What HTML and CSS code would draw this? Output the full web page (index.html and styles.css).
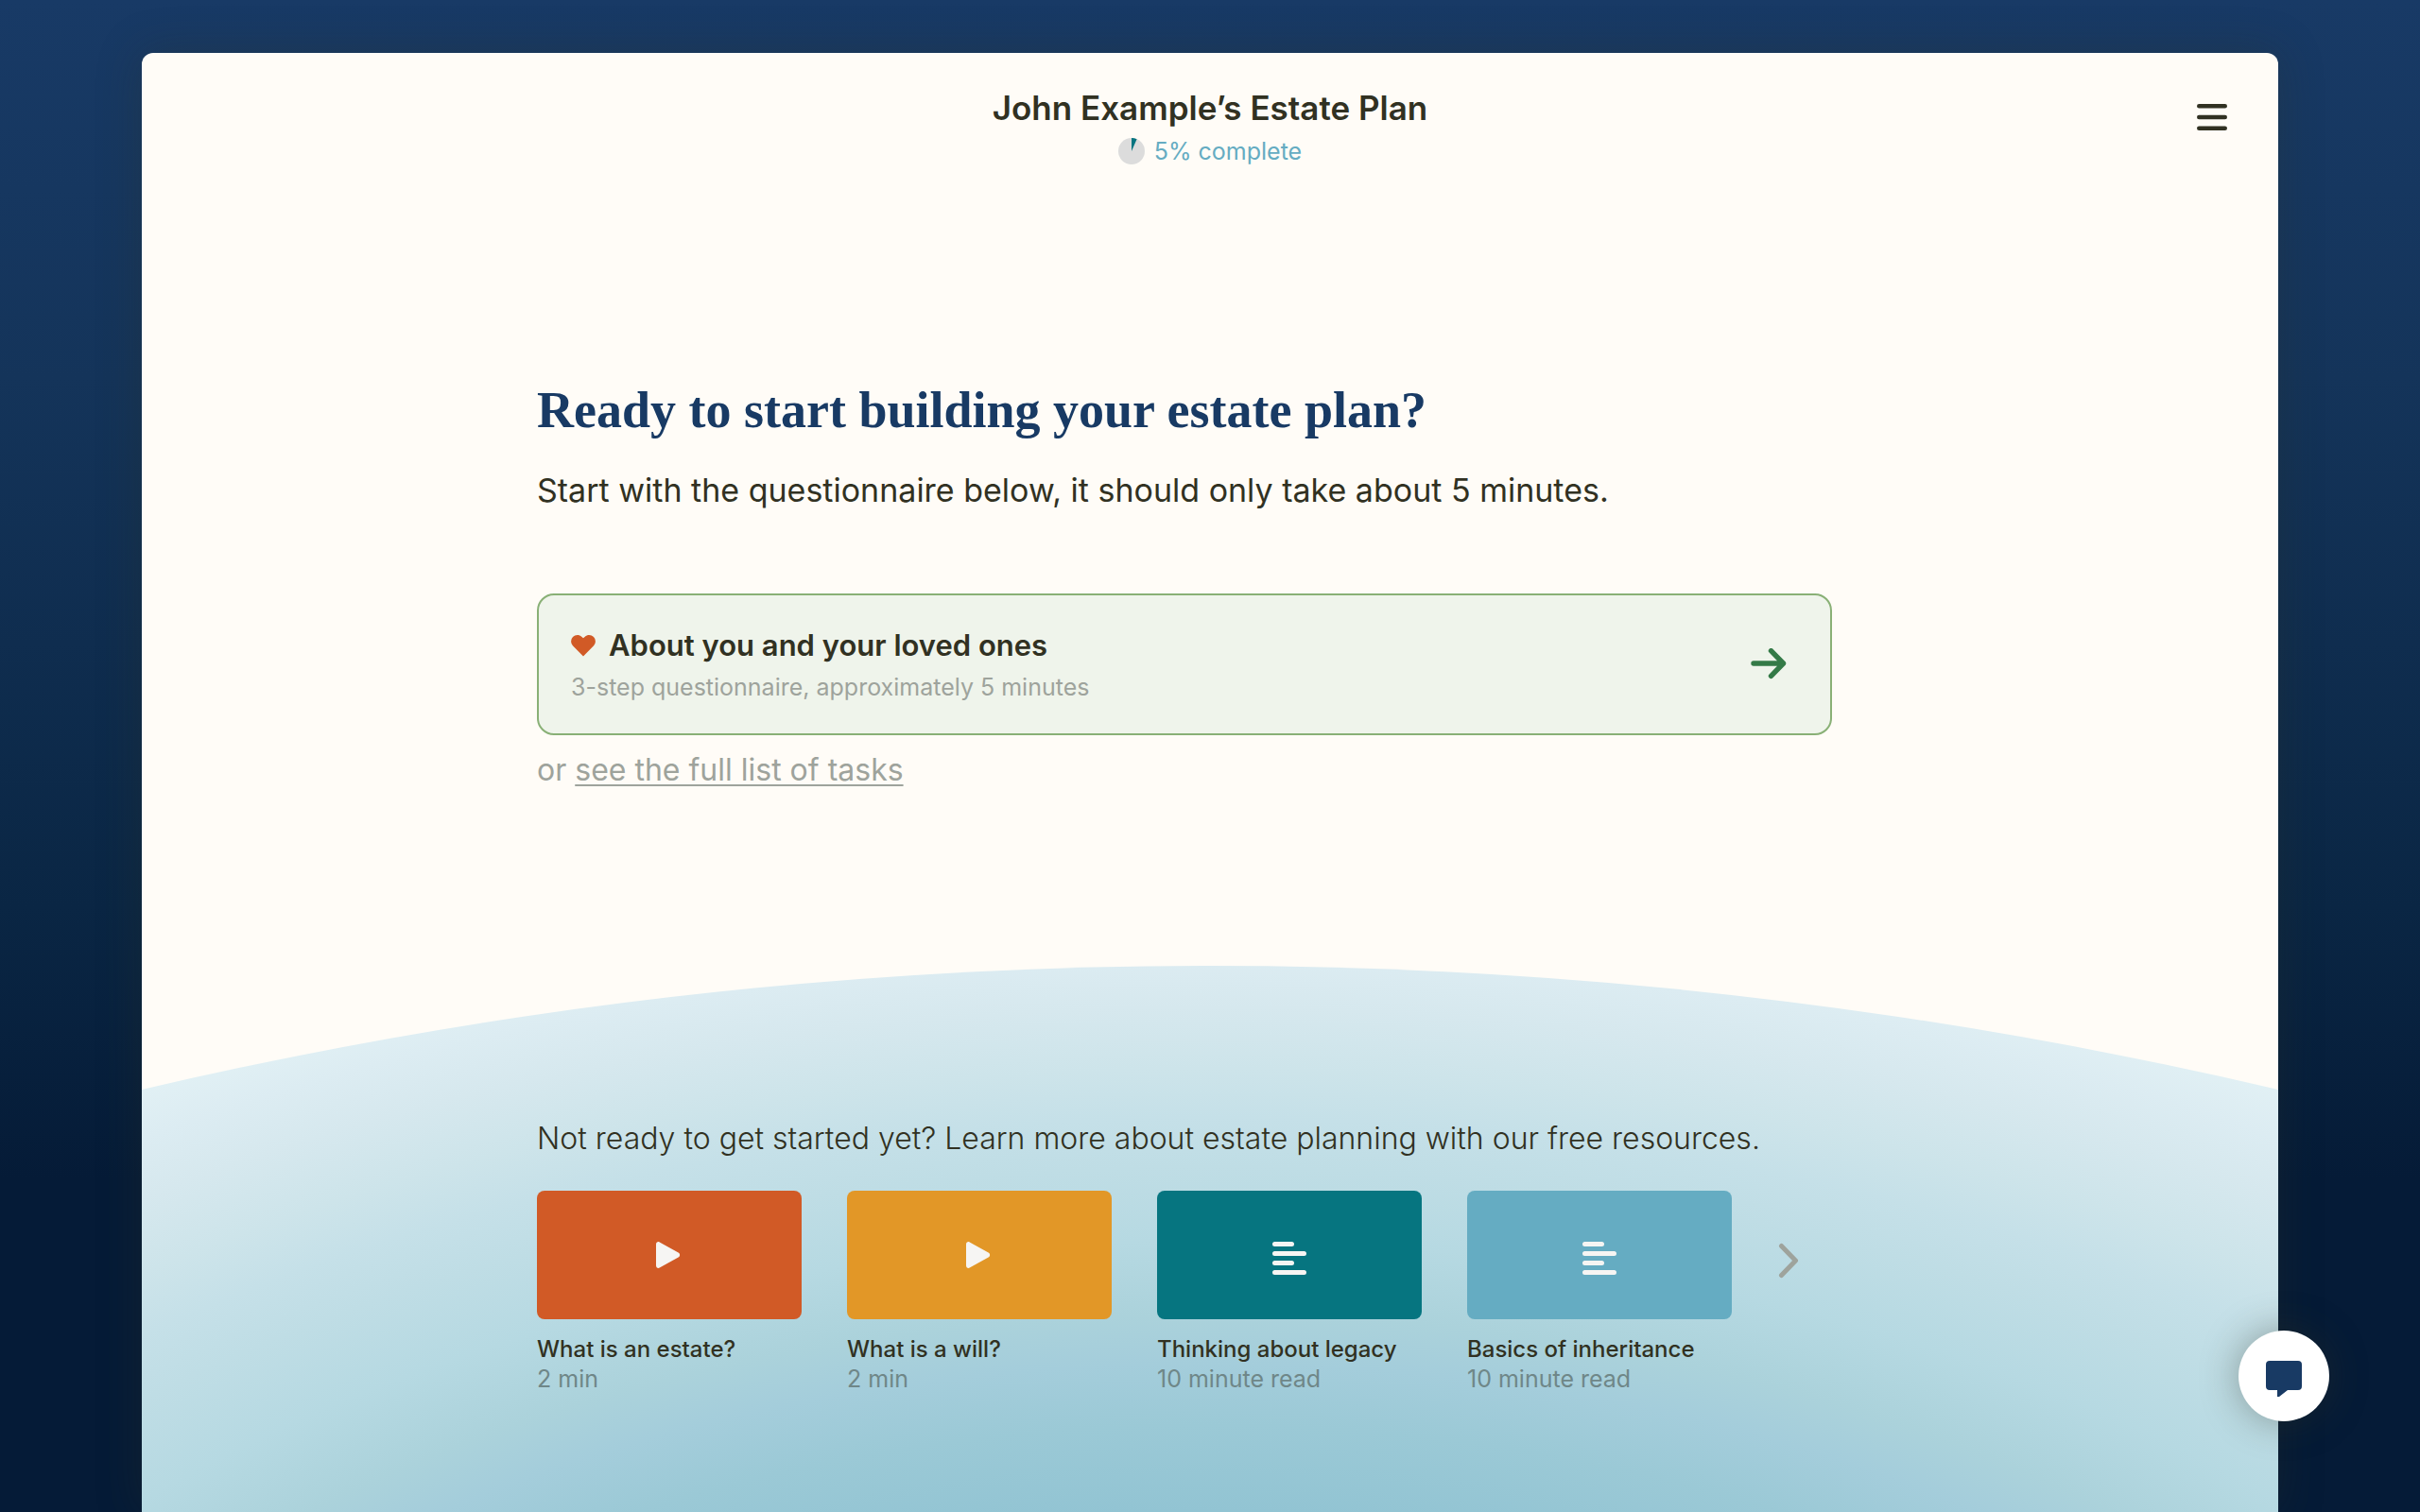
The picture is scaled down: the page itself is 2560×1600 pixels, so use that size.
FILE: index.html
```html
<!DOCTYPE html>
<html lang="en">
<head>
<meta charset="utf-8">
<meta name="viewport" content="width=device-width, initial-scale=1">
<title>John Example’s Estate Plan</title>
<link rel="stylesheet" href="styles.css">
</head>
<body>
<div class="sheet">
  <header class="header">
    <div class="header-title">
      <h1 class="plan-name">John Example’s Estate Plan</h1>
      <p class="progress">
        <svg class="progress-pie" viewBox="0 0 28 28" aria-hidden="true"><circle cx="14" cy="14" r="14" fill="#dcdcdc"/><path d="M14 14V0a14 14 0 0 1 5.600 1.200z" fill="#067580"/></svg>
        <span>5% complete</span>
      </p>
    </div>
    <button class="menu" type="button" aria-label="Menu">
      <svg viewBox="0 0 32 30" width="32" height="30" aria-hidden="true" stroke="#313122" stroke-width="4.600" stroke-linecap="round"><path d="M2.300 3.200h27.400M2.300 15h27.400M2.300 26.800h27.400"/></svg>
    </button>
  </header>

  <main class="main">
    <section class="start column">
      <h2 class="headline">Ready to start building your estate plan?</h2>
      <p class="lead">Start with the questionnaire below, it should only take about 5 minutes.</p>
      <a class="task" href="#questionnaire">
        <span class="task-text">
          <span class="task-title">
            <svg class="heart" viewBox="0 0 26 23" aria-hidden="true"><path d="M13 22.500 1.900 11.300A6.600 6.600 0 0 1 2 2.100C4.500-.5 8.600-.6 11.200 1.700L13 3.300l1.800-1.600C17.400-.6 21.500-.5 24 2.100a6.600 6.600 0 0 1 .1 9.200z" fill="#d15a26"/></svg>
            <span>About you and your loved ones</span>
          </span>
          <span class="task-meta">3-step questionnaire, approximately 5 minutes</span>
        </span>
        <svg class="arrow" viewBox="0 0 38 34" aria-hidden="true" fill="none" stroke="#347a47" stroke-width="5.400" stroke-linecap="round" stroke-linejoin="round"><path d="M3 16h31.500M21.500 2.700 34.500 16 21.500 29.300"/></svg>
      </a>
      <p class="alternative">or <a href="#tasks">see the full list of tasks</a></p>
    </section>

    <section class="hill">
      <div class="column">
        <h2 class="resources-title">Not ready to get started yet? Learn more about estate planning with our free resources.</h2>
        <div class="carousel">
          <ul class="resources">
            <li><a class="resource" href="#estate">
              <span class="tile orange"><svg class="play" viewBox="0 0 28 28" aria-hidden="true"><path d="M0 2.800C0 .8 1.900-.5 3.700.4L23.600 11.500c2 1.100 2 3.900 0 5L3.700 27.600C1.900 28.500 0 27.200 0 25.200z" fill="#f6f5f3"/></svg></span>
              <span class="resource-name">What is an estate?</span><span class="resource-meta">2 min</span></a></li>
            <li><a class="resource" href="#will">
              <span class="tile amber"><svg class="play" viewBox="0 0 28 28" aria-hidden="true"><path d="M0 2.800C0 .8 1.900-.5 3.700.4L23.600 11.500c2 1.100 2 3.900 0 5L3.700 27.600C1.900 28.500 0 27.200 0 25.200z" fill="#f6f5f3"/></svg></span>
              <span class="resource-name">What is a will?</span><span class="resource-meta">2 min</span></a></li>
            <li><a class="resource" href="#legacy">
              <span class="tile teal"><svg class="lines" viewBox="0 0 36 36" aria-hidden="true" stroke="#f6f5f3" stroke-width="5" stroke-linecap="round"><path d="M2.500 3.500h18M2.500 13.500h31M2.500 23.500h18M2.500 33.500h31"/></svg></span>
              <span class="resource-name">Thinking about legacy</span><span class="resource-meta">10 minute read</span></a></li>
            <li><a class="resource" href="#inheritance">
              <span class="tile sky"><svg class="lines" viewBox="0 0 36 36" aria-hidden="true" stroke="#f6f5f3" stroke-width="5" stroke-linecap="round"><path d="M2.500 3.500h18M2.500 13.500h31M2.500 23.500h18M2.500 33.500h31"/></svg></span>
              <span class="resource-name">Basics of inheritance</span><span class="resource-meta">10 minute read</span></a></li>
          </ul>
          <button class="next" type="button" aria-label="More resources">
            <svg viewBox="0 0 22 38" width="22" height="38" aria-hidden="true" fill="none" stroke="#9ea39c" stroke-width="5" stroke-linecap="round" stroke-linejoin="round"><path d="M3.500 3.500 18.500 19 3.500 34.500"/></svg>
          </button>
        </div>
      </div>
    </section>
  </main>
</div>
<button class="chat" type="button" aria-label="Open chat">
  <svg viewBox="0 0 38 38" width="38" height="38" aria-hidden="true"><path d="M4 0h30a4 4 0 0 1 4 4v23a4 4 0 0 1-4 4H23l-9 7h-2v-7H4a4 4 0 0 1-4-4V4a4 4 0 0 1 4-4z" fill="#183a64"/></svg>
</button>
</body>
</html>
```
FILE: styles.css
```css
*, *::before, *::after { box-sizing: border-box; }

:root {
  --ink: #313122;
  --muted: #9ea39c;
  --navy: #183a64;
  --paper: #fffcf7;
}

body {
  margin: 0;
  min-height: 100vh;
  padding: 56px 150px 0;
  display: flex;
  background: linear-gradient(#183a66 0%, #14345a 25%, #0a2644 60%, #051b37 78%, #051b37 100%);
  color: var(--ink);
  font-family: Inter, "Liberation Sans", sans-serif;
}

h1, h2, p, ul { margin: 0; padding: 0; }
ul { list-style: none; }
button { padding: 0; border: 0; background: none; cursor: pointer; display: flex; align-items: center; justify-content: center; }
svg { display: block; flex: none; }

.sheet {
  flex: 1;
  min-width: 0;
  display: flex;
  flex-direction: column;
  overflow: hidden;
  border-radius: 12px 12px 0 0;
  background: var(--paper);
  box-shadow: 0 0 48px rgba(48, 49, 34, 0.3);
}

.header {
  display: grid;
  grid-template-columns: 1fr auto 1fr;
  align-items: start;
  padding: 36px 46px 0;
}
.header-title { grid-column: 2; text-align: center; }
.plan-name { font-size: 35px; line-height: 44px; font-weight: 600; }
.progress {
  display: flex;
  align-items: center;
  justify-content: center;
  gap: 10px;
  margin-top: 6px;
  font-size: 25px;
  line-height: 36px;
  color: #65acc2;
}
.progress-pie { width: 28px; height: 28px; }
.menu { grid-column: 3; justify-self: end; width: 48px; height: 48px; margin-top: 8px; }

.main { flex: 1; display: flex; flex-direction: column; }
.column { margin-left: 418px; max-width: 1370px; }

.start { padding-top: 224px; }
.headline {
  font-family: "Liberation Serif", serif;
  font-size: 54px;
  line-height: 64px;
  font-weight: 700;
  color: var(--navy);
}
.lead { margin-top: 31px; font-size: 34px; line-height: 44px; }

.task {
  display: flex;
  align-items: center;
  justify-content: space-between;
  min-height: 150px;
  margin-top: 87px;
  padding: 0 46px 0 34px;
  border: 2px solid #89b076;
  border-radius: 18px;
  background: #eff4eb;
  color: inherit;
  text-decoration: none;
}
.task-text, .task-title { display: flex; }
.task-text { flex-direction: column; gap: 8px; }
.task-title { align-items: center; gap: 14px; font-size: 31px; line-height: 40px; font-weight: 600; }
.task-meta { font-size: 25px; line-height: 32px; color: var(--muted); }
.heart { width: 26px; height: 23px; }
.arrow { width: 38px; height: 34px; }

.alternative { margin-top: 15px; font-size: 32px; line-height: 44px; color: var(--muted); }
.alternative a { color: inherit; text-decoration-thickness: 2px; text-underline-offset: 4px; }

.hill {
  flex: 1;
  margin-top: 185px;
  padding: 161px 0 96px;
  background: radial-gradient(2250px 1300px at 50% 1201px,
    #92c4d3 48%, #9bc9d6 55%, #a4cddb 60%, #abd2db 64%, #b6d9e2 70%, #bfdde5 76%,
    #c5e0e8 80%, #cde4ea 84%, #d6e8ee 89%, #dcecf2 93%, #e2f1f5 97%);
  clip-path: circle(4939px at 50% 4939px);
}
.resources-title { font-size: 32px; line-height: 44px; font-weight: 300; }
.carousel { display: flex; align-items: flex-start; gap: 48px; margin-top: 33px; }
.resources { display: flex; gap: 48px; }
.resource { display: flex; flex-direction: column; width: 280px; color: inherit; text-decoration: none; white-space: nowrap; }
.tile { display: flex; align-items: center; justify-content: center; height: 136px; margin-bottom: 16px; border-radius: 8px; }
.orange { background: #d15a26; }
.amber { background: #e29727; }
.teal { background: #067580; }
.sky { background: #65acc2; }
.play { width: 28px; height: 28px; }
.lines { width: 36px; height: 36px; margin-top: 6px; }
.resource-name { font-size: 24px; line-height: 32px; font-weight: 500; }
.resource-meta { font-size: 25px; line-height: 30px; color: #6f8788; }
.next { width: 24px; height: 148px; }

.chat {
  position: fixed;
  right: 96px;
  bottom: 96px;
  width: 96px;
  height: 96px;
  padding-top: 6px;
  border-radius: 50%;
  background: #fff;
  box-shadow: 0 0 40px rgba(48, 49, 34, 0.4);
}

@media (max-width: 2000px) {
  body { padding: 32px 32px 0; }
  .column { margin: 0 48px; }
  .resources { flex-wrap: wrap; }
}
```
